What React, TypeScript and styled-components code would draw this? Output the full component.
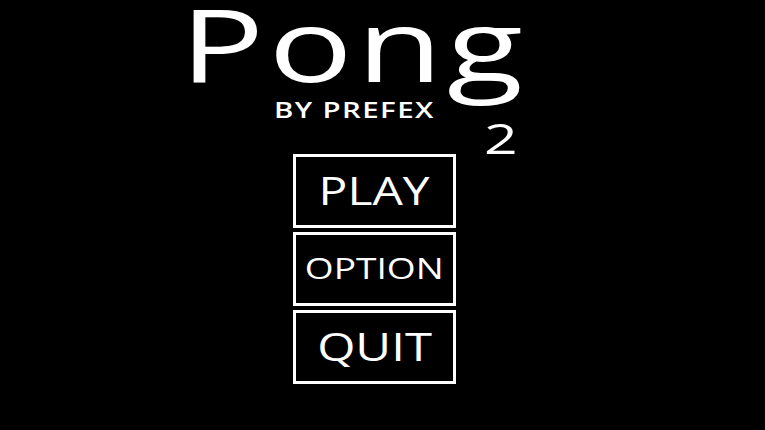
import React from "react";
import styled, { createGlobalStyle } from "styled-components";

const GlobalStyle = createGlobalStyle`
  html, body {
    margin: 0;
    padding: 0;
    background: #000;
  }
  body {
    font-family: "Open Sans", "DejaVu Sans", sans-serif;
    color: #fff;
  }
`;

const Screen = styled.div`
  width: 765px;
  height: 430px;
  background: #000;
  overflow: hidden;
  display: flex;
  flex-direction: column;
  align-items: flex-start;
`;

// the original art is stretched sideways, so text gets a horizontal scale
const Stretch = styled.span<{ x: number; origin?: string }>`
  display: inline-block;
  transform: scaleX(${({ x }) => x});
  transform-origin: ${({ origin }) => origin || "left"} center;
`;

const TitleBlock = styled.div`
  position: relative;
  margin-top: -7px;
  margin-left: 180px;
`;

const Title = styled.h1`
  margin: 0;
  font-size: 100px;
  line-height: 100px;
  font-weight: 500;
  letter-spacing: 3px;
  white-space: nowrap;
`;

const Version = styled.span`
  position: absolute;
  left: 304px;
  top: 124px;
  font-size: 42px;
  line-height: 42px;
  font-weight: 500;
`;

const Byline = styled.div`
  margin-top: 7px;
  margin-left: 274px;
  font-size: 21px;
  line-height: 21px;
  font-weight: 600;
  letter-spacing: 1px;
  white-space: nowrap;
`;

const Menu = styled.div`
  margin-top: 33px;
  margin-left: 293px;
  display: flex;
  flex-direction: column;
  gap: 4px;
`;

const MenuButton = styled.button<{ size: number }>`
  box-sizing: border-box;
  width: 163px;
  height: 74px;
  padding: 0 0 3px;
  background: #000;
  border: 3px solid #fff;
  color: #fff;
  font-family: "Open Sans", "DejaVu Sans", sans-serif;
  font-size: ${({ size }) => size}px;
  font-weight: 500;
  display: flex;
  align-items: center;
  justify-content: center;
  white-space: nowrap;
  cursor: pointer;
`;

const App: React.FC = () => {
  return (
    <Screen>
      <GlobalStyle />
      <TitleBlock>
        <Title>
          <Stretch x={1.4}>Pong</Stretch>
        </Title>
        <Version>
          <Stretch x={1.4}>2</Stretch>
        </Version>
      </TitleBlock>
      <Byline>
        <Stretch x={1.4}>BY PREFEX</Stretch>
      </Byline>
      <Menu>
        <MenuButton size={39}>
          <Stretch x={1.23} origin="center">PLAY</Stretch>
        </MenuButton>
        <MenuButton size={29}>
          <Stretch x={1.28} origin="center">OPTION</Stretch>
        </MenuButton>
        <MenuButton size={39}>
          <Stretch x={1.26} origin="center">QUIT</Stretch>
        </MenuButton>
      </Menu>
    </Screen>
  );
};

export default App;
